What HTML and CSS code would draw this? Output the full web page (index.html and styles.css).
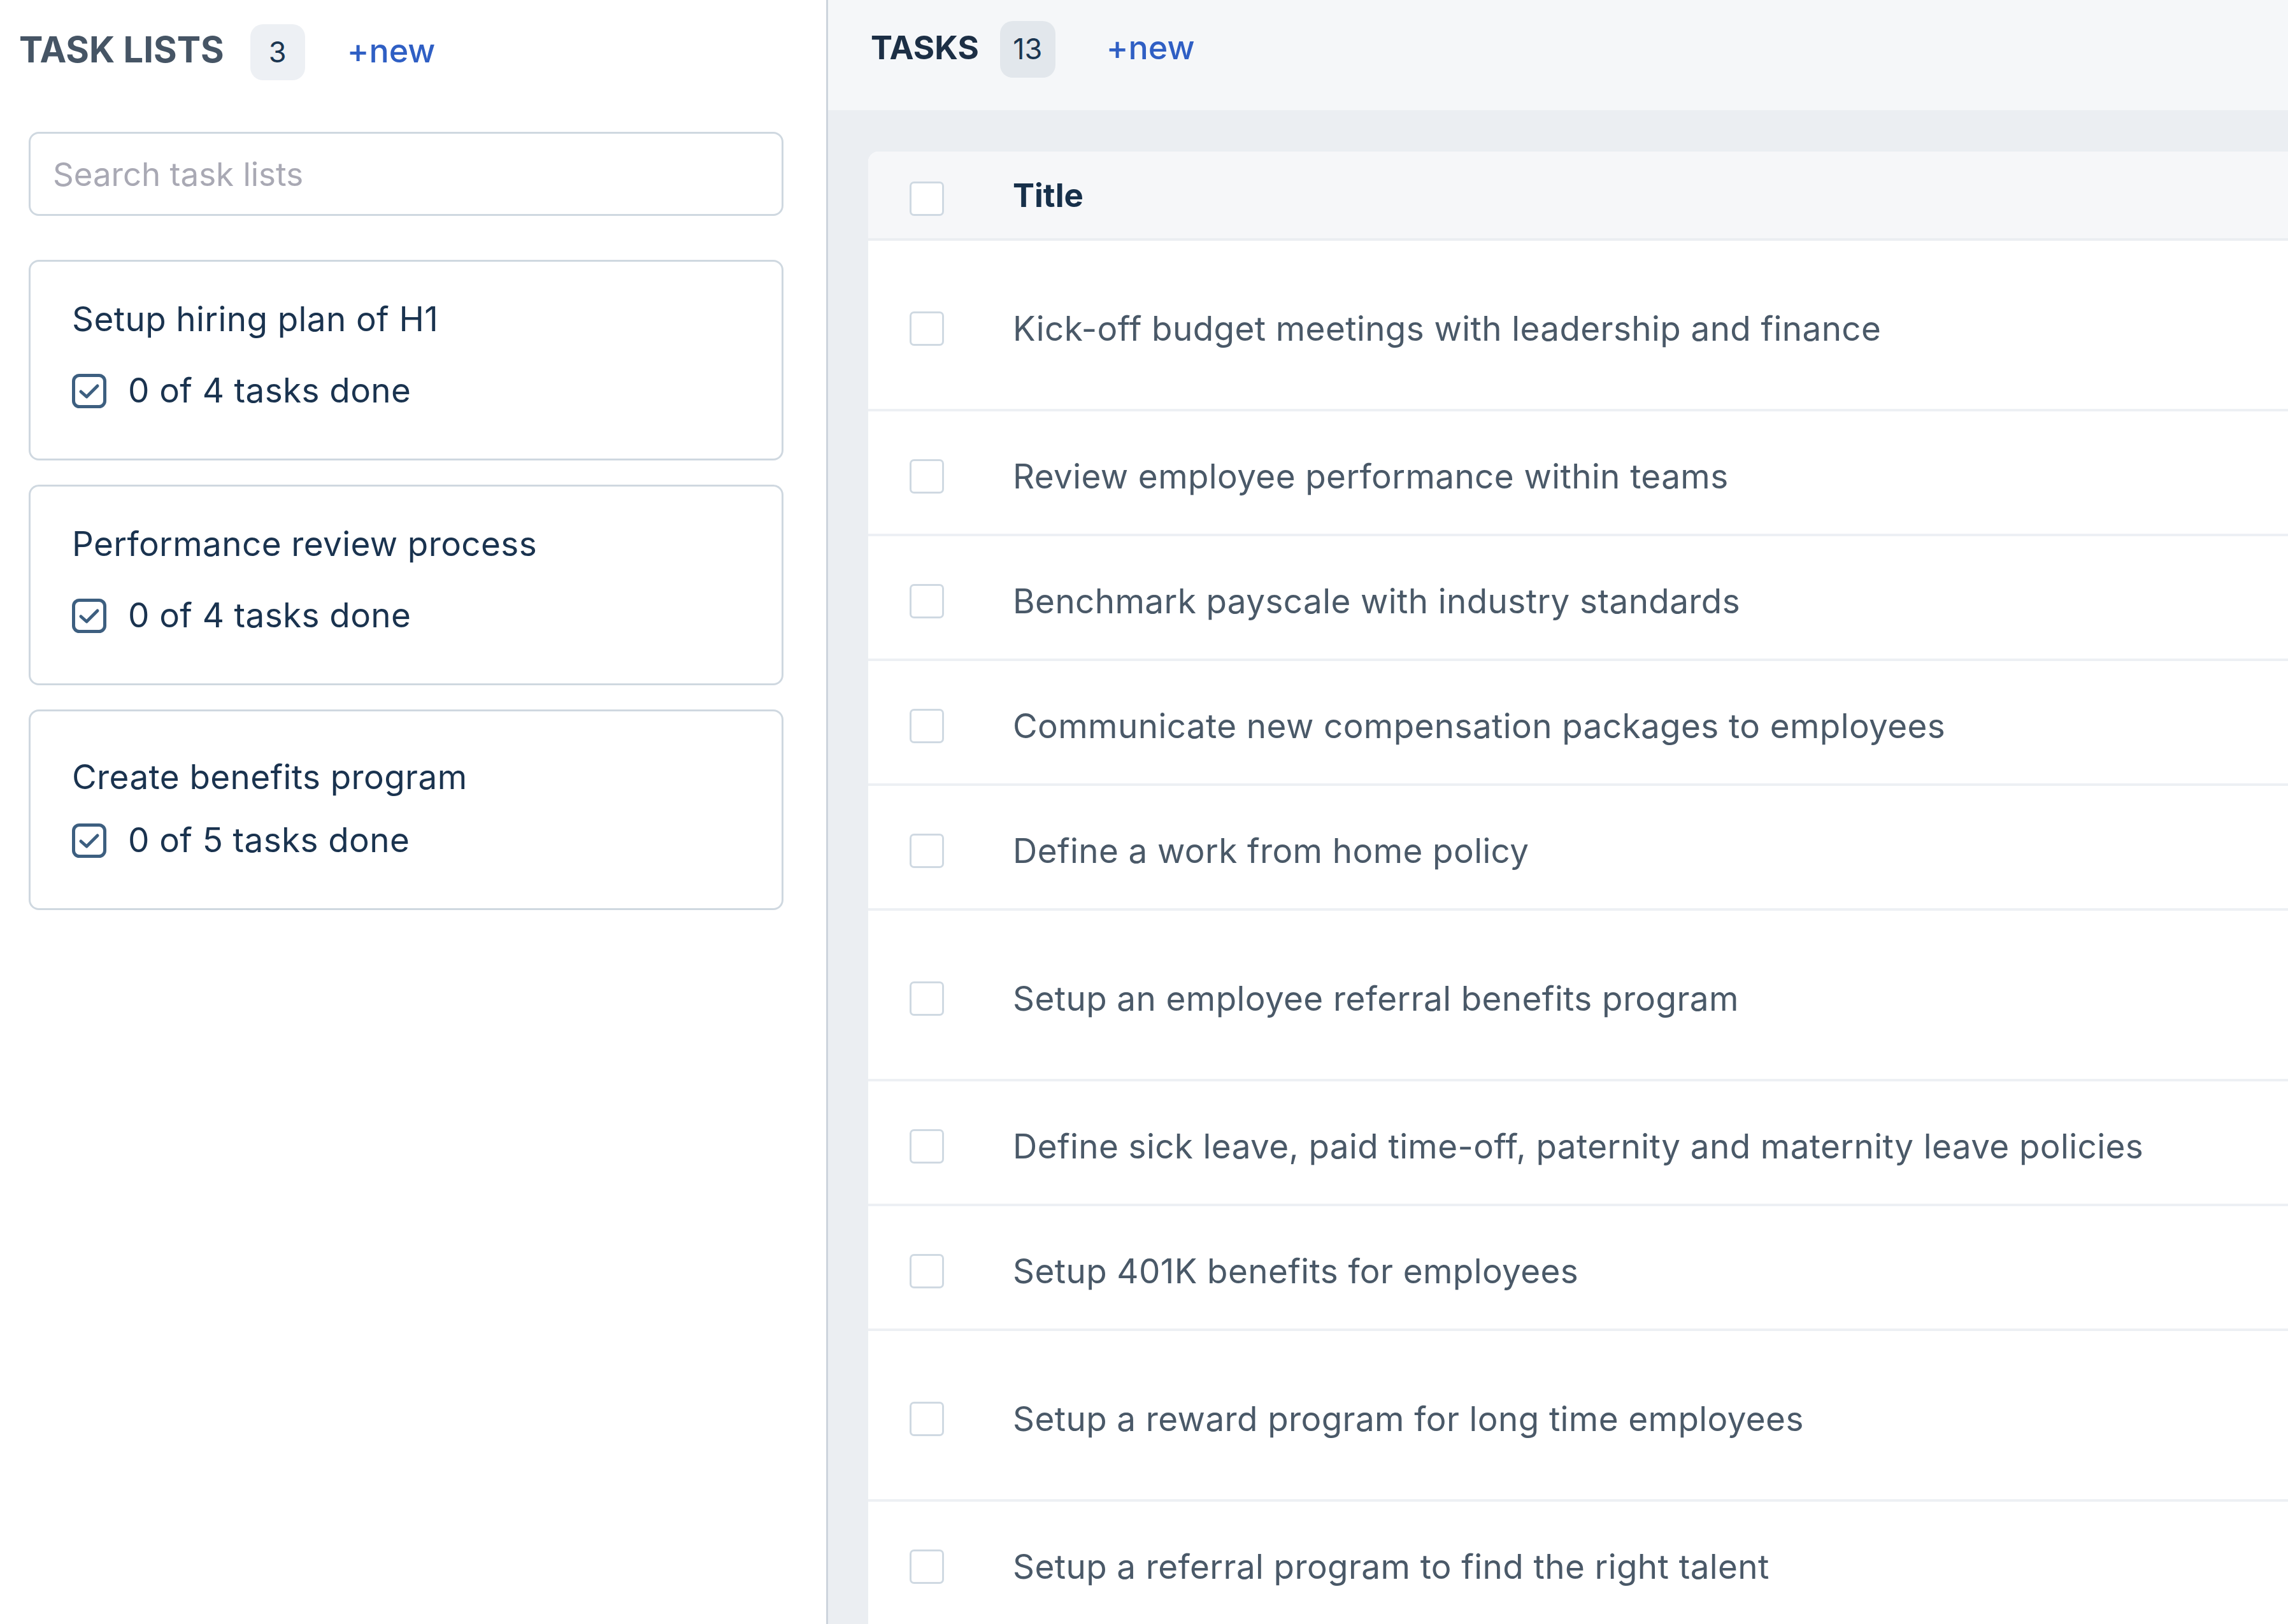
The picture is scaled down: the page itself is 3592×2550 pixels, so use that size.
FILE: index.html
```html
<!DOCTYPE html>
<html lang="en">
<head>
<meta charset="utf-8">
<title>Task lists</title>
<link rel="stylesheet" href="styles.css">
</head>
<body>
<div class="app">
  <aside class="lists">
    <div class="lists-head">
      <span class="head-title">TASK LISTS</span>
      <span class="count">3</span>
      <a class="new" href="#">+new</a>
    </div>
    <input class="search" type="text" placeholder="Search task lists">
    <div class="cards">
      <div class="card">
        <div class="card-title">Setup hiring plan of H1</div>
        <div class="card-meta">
          <svg class="check-ico" viewBox="0 0 54 54"><rect x="2.5" y="2.5" width="49" height="49" rx="9" fill="none" stroke="#3d5f80" stroke-width="5"/><path d="M14 28 L23 36 L40 19" fill="none" stroke="#3d5f80" stroke-width="5" stroke-linecap="round" stroke-linejoin="round"/></svg>
          <span>0 of 4 tasks done</span>
        </div>
      </div>
      <div class="card">
        <div class="card-title">Performance review process</div>
        <div class="card-meta">
          <svg class="check-ico" viewBox="0 0 54 54"><rect x="2.5" y="2.5" width="49" height="49" rx="9" fill="none" stroke="#3d5f80" stroke-width="5"/><path d="M14 28 L23 36 L40 19" fill="none" stroke="#3d5f80" stroke-width="5" stroke-linecap="round" stroke-linejoin="round"/></svg>
          <span>0 of 4 tasks done</span>
        </div>
      </div>
      <div class="card card-last">
        <div class="card-title">Create benefits program</div>
        <div class="card-meta">
          <svg class="check-ico" viewBox="0 0 54 54"><rect x="2.5" y="2.5" width="49" height="49" rx="9" fill="none" stroke="#3d5f80" stroke-width="5"/><path d="M14 28 L23 36 L40 19" fill="none" stroke="#3d5f80" stroke-width="5" stroke-linecap="round" stroke-linejoin="round"/></svg>
          <span>0 of 5 tasks done</span>
        </div>
      </div>
    </div>
  </aside>
  <main class="tasks">
    <div class="tasks-head">
      <span class="head-title dark">TASKS</span>
      <span class="count count-alt">13</span>
      <a class="new new-alt" href="#">+new</a>
    </div>
    <div class="tasks-body">
      <div class="table">
        <div class="thead">
          <span class="box box-head"></span>
          <span class="th">Title</span>
        </div>
        <div class="row tall"><span class="box"></span><span class="cell">Kick-off budget meetings with leadership and finance</span></div>
        <div class="row"><span class="box"></span><span class="cell">Review employee performance within teams</span></div>
        <div class="row"><span class="box"></span><span class="cell">Benchmark payscale with industry standards</span></div>
        <div class="row"><span class="box"></span><span class="cell">Communicate new compensation packages to employees</span></div>
        <div class="row"><span class="box"></span><span class="cell">Define a work from home policy</span></div>
        <div class="row tall"><span class="box"></span><span class="cell">Setup an employee referral benefits program</span></div>
        <div class="row"><span class="box"></span><span class="cell">Define sick leave, paid time-off, paternity and maternity leave policies</span></div>
        <div class="row"><span class="box"></span><span class="cell">Setup 401K benefits for employees</span></div>
        <div class="row tall"><span class="box"></span><span class="cell">Setup a reward program for long time employees</span></div>
        <div class="row"><span class="box"></span><span class="cell">Setup a referral program to find the right talent</span></div>
      </div>
    </div>
  </main>
</div>
</body>
</html>
```
FILE: styles.css
```css
html, body {
  margin: 0;
  padding: 0;
  height: 100%;
  overflow: hidden;
  background: #ffffff;
  font-family: Inter, "Noto Sans", sans-serif;
}
.app {
  display: flex;
  height: 100%;
}
.lists {
  width: 1297px;
  flex: 0 0 1297px;
  border-right: 3px solid #cdd4dc;
  box-sizing: content-box;
  background: #ffffff;
}
.lists-head {
  display: flex;
  align-items: baseline;
  padding: 38px 0 0 30px;
  height: 88px;
}
.head-title {
  font-size: 56px;
  font-weight: 700;
  color: #465565;
}
.head-title.dark {
  color: #1c2f45;
  font-size: 51px;
}
.count {
  display: inline-block;
  width: 86px;
  height: 88px;
  box-sizing: border-box;
  padding-top: 16px;
  margin-left: 41px;
  border-radius: 20px;
  background: #edf0f4;
  color: #1a3550;
  font-size: 45px;
  line-height: 55px;
  text-align: center;
}
.count-alt {
  background: #e2e7ec;
  margin-left: 33px;
  width: 87px;
  height: 89px;
}
.new {
  margin-left: 66px;
  font-size: 52px;
  font-weight: 500;
  color: #2f5fc4;
  text-decoration: none;
}
.new-alt {
  margin-left: 80px;
}
.search {
  display: block;
  box-sizing: border-box;
  margin: 81px 0 0 45px;
  width: 1185px;
  height: 132px;
  border: 3px solid #cfd8e0;
  border-radius: 16px;
  padding: 0 0 0 35px;
  font-family: Inter, "Noto Sans", sans-serif;
  font-size: 51px;
  color: #1a334f;
  outline: none;
}
.search::placeholder {
  color: #a9a9b4;
}
.cards {
  display: flex;
  flex-direction: column;
  gap: 38px;
  margin: 69px 0 0 45px;
  width: 1185px;
}
.card {
  box-sizing: border-box;
  height: 315px;
  border: 3px solid #cfd8e0;
  border-radius: 16px;
  padding: 59px 0 0 65px;
  color: #1a334f;
  font-size: 53px;
  letter-spacing: 0.4px;
}
.card-last {
  padding-top: 72px;
}
.card-title {
  line-height: 63px;
}
.card-meta {
  display: flex;
  align-items: center;
  gap: 34px;
  margin-top: 49px;
  line-height: 63px;
}
.card-last .card-meta {
  margin-top: 36px;
}
.check-ico {
  width: 54px;
  height: 54px;
  flex: 0 0 54px;
}
.tasks {
  flex: 1;
  display: flex;
  flex-direction: column;
  min-width: 0;
}
.tasks-head {
  height: 140px;
  flex: 0 0 140px;
  display: flex;
  align-items: baseline;
  padding: 33px 0 0 67px;
  background: #f5f7f9;
}
.tasks-body {
  flex: 1;
  background: #ebeef2;
  padding: 65px 0 0 63px;
  min-height: 0;
}
.table {
  background: #ffffff;
  border-top-left-radius: 16px;
  overflow: hidden;
  height: 100%;
}
.thead {
  box-sizing: border-box;
  height: 140px;
  display: flex;
  align-items: center;
  padding-left: 65px;
  background: #f6f7f9;
  border-bottom: 4px solid #ebeef2;
}
.th {
  margin-left: 108px;
  font-size: 51px;
  font-weight: 700;
  color: #17304a;
}
.box {
  display: block;
  box-sizing: border-box;
  width: 54px;
  height: 54px;
  flex: 0 0 54px;
  border: 3px solid #cfd9e2;
  border-radius: 7px;
  background: #ffffff;
}
.box-head {
  margin-top: 12px;
}
.row {
  box-sizing: border-box;
  height: 196px;
  display: flex;
  align-items: center;
  padding: 12px 0 0 65px;
  border-bottom: 4px solid #edf0f4;
}
.row.tall {
  height: 268px;
}
.cell {
  margin-left: 108px;
  font-size: 53px;
  letter-spacing: 0.4px;
  color: #4a5968;
  white-space: nowrap;
}
```
